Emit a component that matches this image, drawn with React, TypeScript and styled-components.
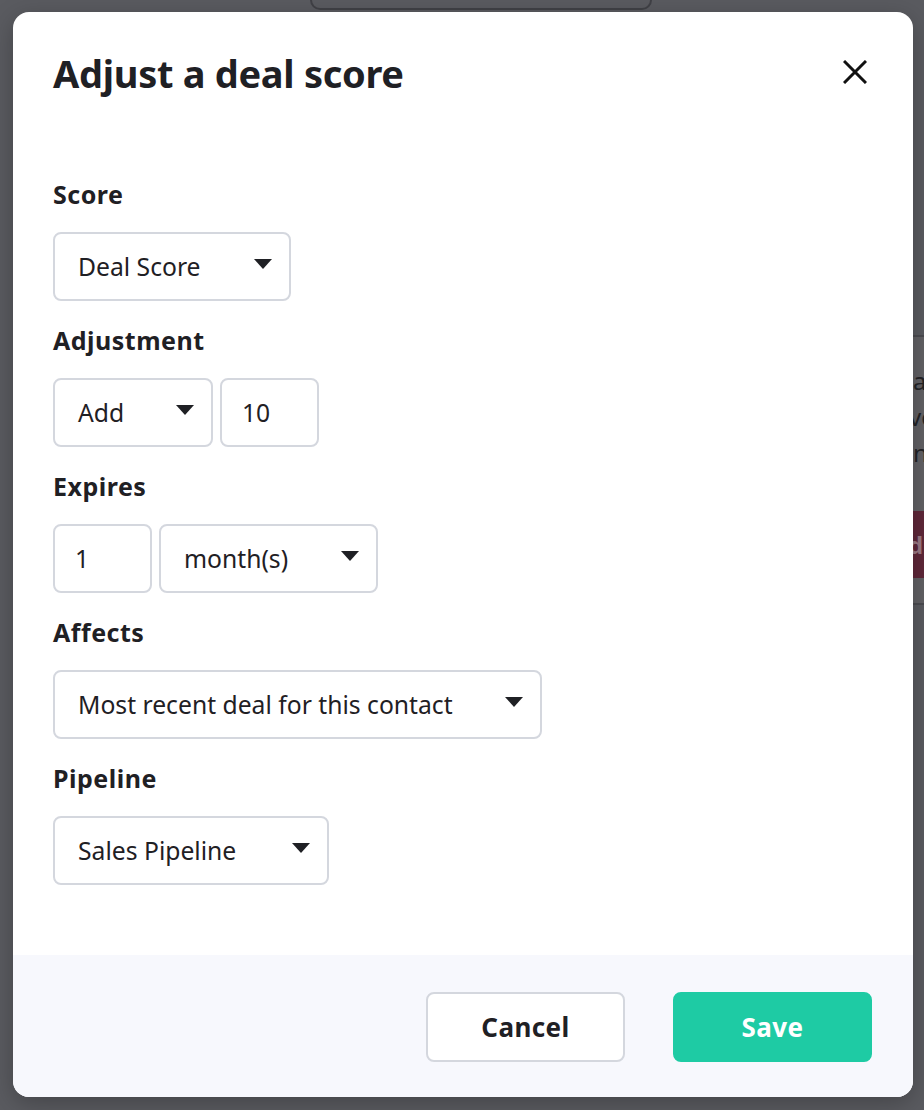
import React from 'react';
import styled, { createGlobalStyle } from 'styled-components';

const GlobalStyle = createGlobalStyle`
	html, body {
		margin: 0;
		padding: 0;
		width: 924px;
		height: 1110px;
		overflow: hidden;
		background: #5a5b60;
		font-family: 'Noto Sans', Roboto, sans-serif;
	}
	* {
		box-sizing: border-box;
	}
`;

const Page = styled.div`
	position: relative;
	width: 924px;
	height: 1110px;
	display: grid;
	grid-template-columns: 880px 1fr;
	overflow: hidden;
`;

const TopStrip = styled.div`
	margin: -20px 0 0 310px;
	width: 342px;
	height: 30px;
	border: 2px solid #404146;
	border-top: none;
	border-radius: 0 0 10px 10px;
`;

const BackCard = styled.div`
	margin-top: 335px;
	height: 270px;
	border-top: 2px solid #4b4b50;
	border-bottom: 2px solid #4b4b50;
	background: #626165;
	padding: 26px 0 0 26px;
	display: flex;
	flex-direction: column;
	color: #232326;
	font-size: 24px;
	line-height: 36px;
`;

const BackLine = styled.span<{ $indent: number }>`
	margin-left: ${(p) => p.$indent}px;
	white-space: nowrap;
`;

const BackButton = styled.div`
	margin-top: 40px;
	height: 67px;
	background: #5f2739;
	color: #9b7984;
	font-weight: 700;
	font-size: 24px;
	display: flex;
	align-items: center;
	padding-left: 2px;
`;

const Modal = styled.div`
	position: absolute;
	top: 12px;
	left: 13px;
	width: 900px;
	height: 1085px;
	background: #fff;
	border-radius: 16px;
	overflow: hidden;
	display: flex;
	flex-direction: column;
	box-shadow: 0 6px 24px rgba(0, 0, 0, 0.25);
`;

const Header = styled.div`
	display: flex;
	align-items: center;
	justify-content: space-between;
	padding: 37px 46px 0 40px;
`;

const Title = styled.h2`
	margin: 0;
	font-size: 38px;
	line-height: 48px;
	font-weight: 700;
	color: #1f2024;
	letter-spacing: -0.3px;
`;

const CloseButton = styled.button`
	border: none;
	background: none;
	padding: 0;
	width: 24px;
	height: 24px;
	margin-top: -2px;
	cursor: pointer;
	display: flex;
`;

const Body = styled.div`
	flex: 1;
	padding: 79px 40px 0;
	display: flex;
	flex-direction: column;
	gap: 21px;
`;

const Group = styled.div`
	display: flex;
	flex-direction: column;
`;

const Label = styled.label`
	font-size: 25px;
	line-height: 36px;
	font-weight: 700;
	color: #1f2024;
	letter-spacing: 0.5px;
	margin-bottom: 20px;
`;

const Row = styled.div`
	display: flex;
	gap: 7px;
`;

const Select = styled.div<{ $width: number }>`
	width: ${(p) => p.$width}px;
	height: 69px;
	border: 2px solid #d4d7de;
	border-radius: 8px;
	display: flex;
	align-items: center;
	justify-content: space-between;
	padding: 0 17px 0 23px;
	font-size: 24.7px;
	color: #1f2024;
	background: #fff;
`;

const Input = styled.div<{ $width: number }>`
	width: ${(p) => p.$width}px;
	height: 69px;
	border: 2px solid #d4d7de;
	border-radius: 8px;
	display: flex;
	align-items: center;
	padding: 0 20px;
	font-size: 24.7px;
	color: #1f2024;
	background: #fff;
`;

const Arrow = styled.span`
	width: 0;
	height: 0;
	border-left: 9.5px solid transparent;
	border-right: 9.5px solid transparent;
	border-top: 10px solid #1f2024;
	margin-top: -6px;
`;

const Footer = styled.div`
	height: 142px;
	background: #f7f8fd;
	display: flex;
	justify-content: flex-end;
	align-items: flex-start;
	gap: 48px;
	padding: 37px 41px 0 0;
`;

const Button = styled.button<{ $primary?: boolean }>`
	width: 199px;
	height: 70px;
	border-radius: 8px;
	border: 2px solid ${(p) => (p.$primary ? '#1ecba4' : '#d4d7de')};
	background: ${(p) => (p.$primary ? '#1ecba4' : '#fff')};
	color: ${(p) => (p.$primary ? '#fff' : '#1f2024')};
	font-family: 'Noto Sans', Roboto, sans-serif;
	font-size: 26px;
	font-weight: 700;
	letter-spacing: 0.4px;
	cursor: pointer;
`;

const Dropdown = ({ width, value }: { width: number; value: string }) => (
	<Select $width={width}>
		<span>{value}</span>
		<Arrow />
	</Select>
);

export default function App() {
	return (
		<>
			<GlobalStyle />
			<Page>
				<TopStrip />
				<BackCard>
					<BackLine $indent={7}>a</BackLine>
					<BackLine $indent={3}>ve</BackLine>
					<BackLine $indent={7}>n</BackLine>
					<BackButton>d</BackButton>
				</BackCard>
				<Modal>
					<Header>
						<Title>Adjust a deal score</Title>
						<CloseButton aria-label='Close'>
							<svg width='24' height='24' viewBox='0 0 24 24'>
								<path d='M1 1 L23 23 M23 1 L1 23' stroke='#111' strokeWidth='3' strokeLinecap='butt' fill='none' />
							</svg>
						</CloseButton>
					</Header>
					<Body>
						<Group>
							<Label>Score</Label>
							<Dropdown width={238} value='Deal Score' />
						</Group>
						<Group>
							<Label>Adjustment</Label>
							<Row>
								<Dropdown width={160} value='Add' />
								<Input $width={99}>10</Input>
							</Row>
						</Group>
						<Group>
							<Label>Expires</Label>
							<Row>
								<Input $width={99}>1</Input>
								<Dropdown width={219} value='month(s)' />
							</Row>
						</Group>
						<Group>
							<Label>Affects</Label>
							<Dropdown width={489} value='Most recent deal for this contact' />
						</Group>
						<Group>
							<Label>Pipeline</Label>
							<Dropdown width={276} value='Sales Pipeline' />
						</Group>
					</Body>
					<Footer>
						<Button>Cancel</Button>
						<Button $primary>Save</Button>
					</Footer>
				</Modal>
			</Page>
		</>
	);
}
